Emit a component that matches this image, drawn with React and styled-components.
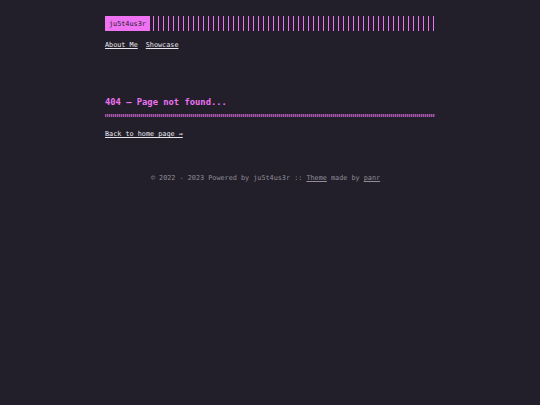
import React from "react";
import styled, { createGlobalStyle } from "styled-components";

const accent = "#ee72f1";
const bg = "#221f2a";

const Global = createGlobalStyle`
  html, body { margin: 0; padding: 0; background: ${bg}; }
  body { font-family: "DejaVu Sans Mono", "Liberation Mono", monospace; color: #e8e6ec; }
`;

const Page = styled.div`
  min-height: 405px;
  background: ${bg};
`;

const Container = styled.div`
  width: 330px;
  margin: 0 auto;
  padding-top: 16px;
`;

const Header = styled.header`
  display: flex;
  flex-direction: column;
`;

const LogoRow = styled.div`
  display: flex;
  align-items: stretch;
  height: 15px;
  gap: 3px;
`;

const Logo = styled.a`
  display: flex;
  align-items: center;
  background: ${accent};
  color: ${bg};
  font-size: 6.8px;
  padding: 0 4px;
  text-decoration: none;
`;

const LogoLine = styled.div`
  flex: 1;
  margin-right: 1px;
  background: repeating-linear-gradient(
    90deg,
    ${accent} 0 1px,
    transparent 1px 5px
  );
`;

const Nav = styled.nav`
  display: flex;
  gap: 8px;
  margin-top: 10px;
`;

const NavLink = styled.a`
  color: #e8e6ec;
  font-size: 6.8px;
  text-decoration: underline;
  text-underline-offset: 1px;
`;

const Main = styled.main`
  margin-top: 48px;
`;

const Title = styled.h1`
  margin: 0;
  color: ${accent};
  font-size: 8.8px;
  font-weight: bold;
  line-height: 11px;
`;

const Dots = styled.div`
  margin-top: 6px;
  height: 3px;
  background:
    repeating-linear-gradient(90deg, rgba(238,114,241,0.75) 0 1px, rgba(238,114,241,0.35) 1px 2px);
  opacity: 0.85;
`;

const BackLink = styled.a`
  display: inline-block;
  margin-top: 13px;
  color: #e8e6ec;
  font-size: 6.8px;
  text-decoration: underline;
  text-underline-offset: 1px;
`;

const Footer = styled.footer`
  margin-top: 34px;
  padding-right: 9px;
  text-align: center;
  color: #8f8c96;
  font-size: 6.8px;
`;

const FootLink = styled.a`
  color: #8f8c96;
  text-decoration: underline;
  text-underline-offset: 1px;
`;

export default function App() {
  return (
    <Page>
      <Global />
      <Container>
        <Header>
          <LogoRow>
            <Logo href="#">ju5t4us3r</Logo>
            <LogoLine />
          </LogoRow>
          <Nav>
            <NavLink href="#">About Me</NavLink>
            <NavLink href="#">Showcase</NavLink>
          </Nav>
        </Header>
        <Main>
          <Title>404 — Page not found...</Title>
          <Dots />
          <BackLink href="#">Back to home page →</BackLink>
        </Main>
        <Footer>
          © 2022 - 2023 Powered by ju5t4us3r :: <FootLink href="#">Theme</FootLink> made by <FootLink href="#">panr</FootLink>
        </Footer>
      </Container>
    </Page>
  );
}
